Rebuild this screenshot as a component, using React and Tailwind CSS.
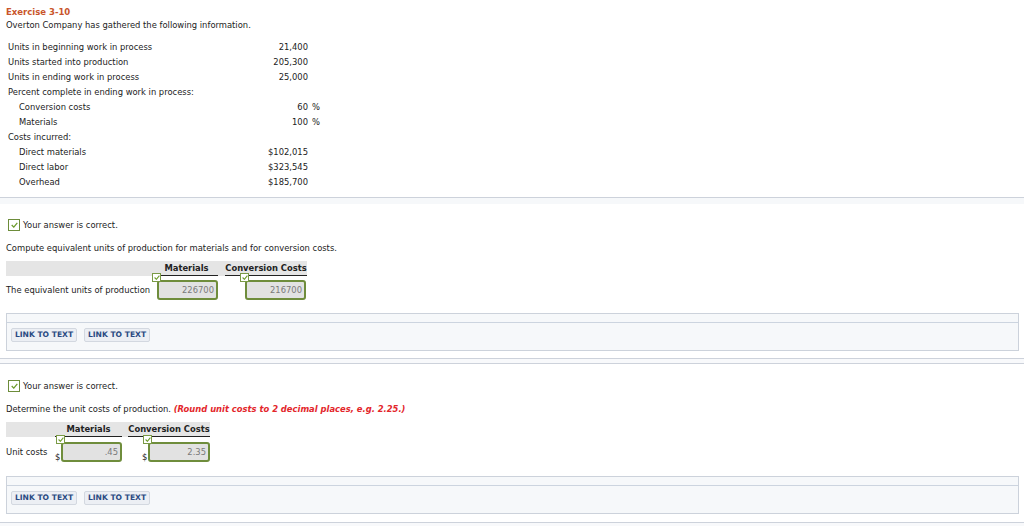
import React from 'react'

const FONT = { fontFamily: '"DejaVu Sans", Verdana, sans-serif' }

const INFO = [
  { label: 'Units in beginning work in process', value: '21,400' },
  { label: 'Units started into production', value: '205,300' },
  { label: 'Units in ending work in process', value: '25,000' },
  { label: 'Percent complete in ending work in process:' },
  { label: 'Conversion costs', value: '60', suffix: '%', indent: true },
  { label: 'Materials', value: '100', suffix: '%', indent: true },
  { label: 'Costs incurred:' },
  { label: 'Direct materials', value: '$102,015', indent: true },
  { label: 'Direct labor', value: '$323,545', indent: true },
  { label: 'Overhead', value: '$185,700', indent: true },
]

function Tick({ className = 'w-[6px] h-[4px]' }) {
  return (
    <svg viewBox="0 0 10 8" className={className}>
      <path d="M1 4 L4 7 L9 1" fill="none" stroke="#6b9a2a" strokeWidth="1.8" />
    </svg>
  )
}

function CorrectBadge() {
  return (
    <div className="flex items-center h-[12px]">
      <div className="w-[12px] h-[12px] border border-[#6d8c3a] bg-white flex items-center justify-center">
        <Tick className="w-[7px] h-[6px]" />
      </div>
      <span className="ml-[3px] text-[8.4px] text-[#222]">Your answer is correct.</span>
    </div>
  )
}

function AnswerBox({ value, width }) {
  return (
    <div className="relative">
      <div className="absolute -left-[5px] -top-[7px] w-[9px] h-[9px] bg-white border border-[#7a9a45] flex items-center justify-center">
        <Tick className="w-[6px] h-[5px]" />
      </div>
      <div
        className={`${width} h-[20px] bg-[#e2e2e2] border-2 border-[#6f8d3c] rounded-[3px] flex items-center justify-end pr-[2px] text-[8.4px] text-[#7a7a7a]`}
      >
        {value}
      </div>
    </div>
  )
}

function LinkPanel() {
  return (
    <div className="mx-[6px] mr-[5px] border border-[#ccd2db] bg-[#f6f8fa]">
      <div className="h-[9px] border-b border-[#ccd4df]"></div>
      <div className="h-[27px] flex items-start pt-[5px] gap-[7px] pl-[4px]">
        {['LINK TO TEXT', 'LINK TO TEXT'].map((t, i) => (
          <div
            key={i}
            className="h-[14px] w-[66px] flex items-center justify-center border border-[#d3d8e0] rounded-[2px] bg-[#eceff4] text-[7.6px] font-bold text-[#2a4a82]"
          >
            {t}
          </div>
        ))}
      </div>
    </div>
  )
}

function Separator() {
  return <div className="border-t border-[#cdd2db] h-[6px] border-b bg-[#f8f9fb]"></div>
}

export default function App() {
  return (
    <div className="w-[1024px] h-[526px] bg-white overflow-hidden text-[#222]" style={FONT}>
      {/* Header */}
      <div className="px-[6px] pt-[6px]">
        <div className="h-[12px] leading-[12px] text-[8.5px] font-bold text-[#c9552c]">Exercise 3-10</div>
        <div className="mt-[1px] h-[12px] leading-[12px] text-[8.4px]">Overton Company has gathered the following information.</div>
      </div>

      {/* Info table */}
      <div className="mt-[9px] pl-[8px]">
        {INFO.map((r, i) => (
          <div key={i} className="flex h-[15px] items-center text-[8.4px]">
            <div className={`w-[200px] ${r.indent ? 'pl-[11px]' : ''}`}>{r.label}</div>
            <div className="w-[100px] text-right">{r.value}</div>
            <div className="w-[12px] text-right">{r.suffix}</div>
          </div>
        ))}
      </div>

      <div className="mt-[7px] border-t border-[#cdd2db] h-[7px] bg-[#f6f8fa]"></div>

      {/* Part 1 */}
      <div className="pt-[15px] pl-[8px]">
        <CorrectBadge />
      </div>
      <div className="mt-[11px] pl-[6px] h-[12px] leading-[12px] text-[8.4px]">
        Compute equivalent units of production for materials and for conversion costs.
      </div>
      <div className="mt-[7px] ml-[6px] w-[301px] h-[15px] bg-[#e5e5e5] flex items-end text-[8.4px] font-bold">
        <div className="w-[149px]"></div>
        <div className="w-[63px] h-[13px] border-b border-[#222] text-center leading-[11px]">Materials</div>
        <div className="w-[7px]"></div>
        <div className="w-[82px] h-[13px] border-b border-[#222] text-center leading-[11px]">Conversion Costs</div>
      </div>
      <div className="mt-[4px] ml-[6px] flex items-center h-[20px] text-[8.4px]">
        <div className="w-[151px]">The equivalent units of production</div>
        <AnswerBox value="226700" width="w-[61px]" />
        <div className="w-[27px]"></div>
        <AnswerBox value="216700" width="w-[61px]" />
      </div>

      <div className="mt-[13px]">
        <LinkPanel />
      </div>

      <div className="mt-[7px]">
        <Separator />
      </div>

      {/* Part 2 */}
      <div className="pt-[16px] pl-[8px]">
        <CorrectBadge />
      </div>
      <div className="mt-[11px] pl-[6px] h-[12px] leading-[12px] text-[8.4px]">
        Determine the unit costs of production.{' '}
        <span className="font-bold italic text-[#e3262b]">(Round unit costs to 2 decimal places, e.g. 2.25.)</span>
      </div>
      <div className="mt-[7px] ml-[6px] w-[204px] h-[15px] bg-[#e5e5e5] flex items-end text-[8.4px] font-bold">
        <div className="w-[49px]"></div>
        <div className="w-[67px] h-[13px] border-b border-[#222] text-center leading-[11px]">Materials</div>
        <div className="w-[6px]"></div>
        <div className="w-[82px] h-[13px] border-b border-[#222] text-center leading-[11px]">Conversion Costs</div>
      </div>
      <div className="mt-[5px] ml-[6px] flex items-center h-[20px] text-[8.4px]">
        <div className="w-[49px]">Unit costs</div>
        <div className="self-end leading-[10px] w-[6px]">$</div>
        <AnswerBox value=".45" width="w-[61px]" />
        <div className="w-[20px]"></div>
        <div className="self-end leading-[10px] w-[6px]">$</div>
        <AnswerBox value="2.35" width="w-[62px]" />
      </div>

      <div className="mt-[14px]">
        <LinkPanel />
      </div>

      <div className="mt-[8px]">
        <Separator />
      </div>
    </div>
  )
}
